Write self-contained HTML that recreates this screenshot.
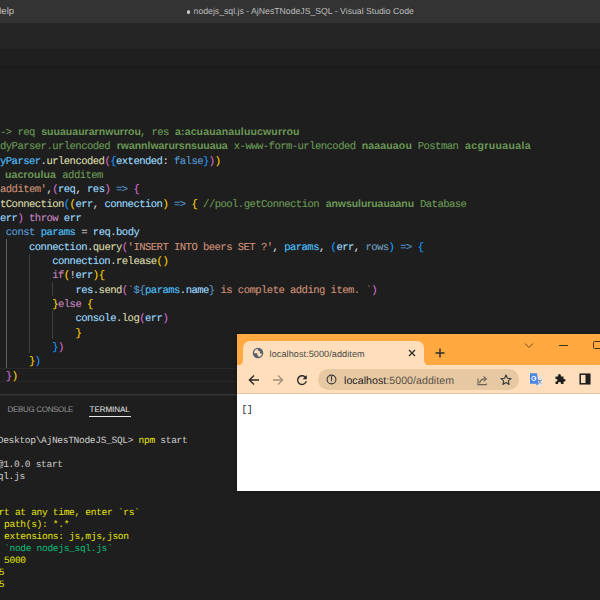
<!DOCTYPE html>
<html><head><meta charset="utf-8">
<style>
*{margin:0;padding:0;box-sizing:border-box}
html,body{width:600px;height:600px;overflow:hidden;background:#1e1e1e}
body{position:relative;font-family:"Liberation Sans",sans-serif;text-rendering:geometricPrecision}
.abs{position:absolute}
#title{left:0;top:0;width:600px;height:22.5px;background:#333333}
#title .t{position:absolute;top:5.4px;font-size:8.7px;color:#bdbdbd;white-space:nowrap;line-height:12px;text-rendering:geometricPrecision}
#tabs{left:0;top:22.5px;width:600px;height:26.3px;background:#252526}
#crumb{left:0;top:48.8px;width:600px;height:17px;background:#1f1f1f}
#shadow{left:0;top:65.7px;width:600px;height:2.3px;background:linear-gradient(#151515,#1e1e1e)}
.ln{position:absolute;left:0;height:14.33px;line-height:14.33px;font-family:"Liberation Mono",monospace;font-size:10.6px;letter-spacing:-0.56px;text-rendering:geometricPrecision;white-space:pre;color:#d4d4d4;-webkit-text-stroke:0.1px currentColor}
.seg{position:absolute;height:14.25px;line-height:14.25px;font-family:"Liberation Mono",monospace;font-size:9.617px;white-space:pre;color:#d4d4d4}
.th{position:absolute;height:14.33px;line-height:14.33px;font-family:"Liberation Sans",sans-serif;font-size:10.5px;font-weight:bold;-webkit-text-stroke:0px currentColor;white-space:pre;color:#6a9955;overflow:hidden}
.c{color:#6a9955}.v{color:#9cdcfe}.f{color:#dcdcaa}.k{color:#c586c0}.s{color:#569cd6}.q{color:#ce9178}.n{color:#4fc1ff}
.b1{color:#ffd700}.b2{color:#da70d6}.b3{color:#179fff}
.guide{position:absolute;width:1px;background:#404040}
#curline{left:0;top:368px;width:600px;height:14px;border-top:1px solid #282828;border-bottom:1px solid #282828}
#panelborder{left:0;top:394px;width:600px;height:2px;background:linear-gradient(#363636 50%,#292929 50%)}
.ptab{position:absolute;top:404px;font-size:8px;text-rendering:geometricPrecision;line-height:12px;white-space:nowrap;color:#969696}
.tl{position:absolute;left:0;height:12px;line-height:12px;font-family:"Liberation Mono",monospace;font-size:9.6px;letter-spacing:-0.34px;text-rendering:geometricPrecision;white-space:pre;color:#cccccc}
.y{color:#e5e510}.g{color:#0dbc79}
/* chrome */
#chrome{left:237px;top:333.7px;width:364px;height:157.1px;background:#ffa940;overflow:hidden;box-shadow:0 0 3px 1px rgba(0,0,0,0.22)}
</style></head><body>
<div id="title" class="abs">
  <div class="t" style="left:-5.5px;top:6.4px;font-size:9.5px;letter-spacing:0;text-rendering:geometricPrecision">Help</div>
  <div class="abs" style="left:186.6px;top:10.1px;width:3.8px;height:3.8px;border-radius:50%;background:#c8c8c8"></div>
  <div class="t" style="left:193.6px">nodejs_sql.js - AjNesTNodeJS_SQL - Visual Studio Code</div>
</div>
<div id="tabs" class="abs"></div>
<div id="crumb" class="abs"></div>
<div id="shadow" class="abs"></div>

<!-- editor -->
<div id="curline" class="abs"></div>
<div class="guide" style="left:6px;top:239px;height:129px;background:#5e5e5e"></div>
<div class="guide" style="left:29px;top:253.5px;height:99.5px"></div>
<div class="guide" style="left:52px;top:282px;height:14px"></div>
<div class="guide" style="left:52px;top:310.5px;height:28.5px"></div>

<div id="code">
<div class="ln" style="top:126.10px;left:0px"><span class="c">-&gt; req </span></div>
<div class="th" style="top:124.90px;left:41.2px;width:101.8px;letter-spacing:0.036px">suuauaurarnwurrou</div>
<div class="ln" style="top:126.10px;left:139.9px"><span class="c">, res </span></div>
<div class="th" style="top:124.90px;left:175px;width:126.5px;letter-spacing:0.150px">a:acuauanauluucwurrou</div>
<div class="ln" style="top:140.43px;left:0px"><span class="c">dyParser.urlencoded </span></div>
<div class="th" style="top:139.23px;left:116.7px;width:113px;letter-spacing:-0.024px">rwannlwarursnsuuaua</div>
<div class="ln" style="top:140.43px;left:233.8px"><span class="c">x-www-form-urlencoded</span></div>
<div class="th" style="top:139.23px;left:361.7px;width:52.3px;letter-spacing:0.161px">naaauaou</div>
<div class="ln" style="top:140.43px;left:417.7px"><span class="c">Postman</span></div>
<div class="th" style="top:139.23px;left:465px;width:68px;letter-spacing:0.376px">acgruuauala</div>
<div class="ln" style="top:154.76px;left:0px"><span class="n">yParser</span>.<span class="f">urlencoded</span><span class="b2">(</span><span class="b3">{</span><span class="v">extended</span>: <span class="s">false</span><span class="b3">}</span><span class="b2">)</span><span class="b1">)</span></div>
<div class="th" style="top:167.89px;left:5px;width:53px;letter-spacing:0.090px">uacroulua</div>
<div class="ln" style="top:169.09px;left:62.3px"><span class="c">additem</span></div>
<div class="ln" style="top:183.42px;left:0px"><span class="q">additem'</span>,<span class="b2">(</span><span class="v">req</span>, <span class="v">res</span><span class="b2">)</span> <span class="s">=&gt;</span> <span class="b2">{</span></div>
<div class="ln" style="top:197.75px;left:0px"><span class="f">tConnection</span><span class="b3">(</span><span class="b1">(</span><span class="v">err</span>, <span class="v">connection</span><span class="b1">)</span> <span class="s">=&gt;</span> <span class="b1">{</span> <span class="c">//pool.getConnection </span></div>
<div class="th" style="top:196.55px;left:325.7px;width:90.3px;letter-spacing:-0.064px">anwsuluruauaanu</div>
<div class="ln" style="top:197.75px;left:420px"><span class="c">Database</span></div>
<div class="ln" style="top:212.08px;left:0px"><span class="v">err</span><span class="b2">)</span> <span class="k">throw</span> <span class="v">err</span></div>
<div class="ln" style="top:226.41px;left:0px"> <span class="s">const</span> <span class="n">params</span> = <span class="v">req</span>.<span class="v">body</span></div>
<div class="ln" style="top:240.74px;left:0px">     <span class="v">connection</span>.<span class="f">query</span><span class="b2">(</span><span class="q">'INSERT INTO beers SET ?'</span>, <span class="n">params</span>, <span class="b3">(</span><span class="v">err</span>, <span class="v" style="opacity:0.66">rows</span><span class="b3">)</span> <span class="s">=&gt;</span> <span class="b3">{</span></div>
<div class="ln" style="top:255.07px;left:0px">         <span class="v">connection</span>.<span class="f">release</span><span class="b1">()</span></div>
<div class="ln" style="top:269.40px;left:0px">         <span class="k">if</span><span class="b1">(</span>!<span class="v">err</span><span class="b1">)</span><span class="b1">{</span></div>
<div class="ln" style="top:283.73px;left:0px">             <span class="v">res</span>.<span class="f">send</span><span class="b2">(</span><span class="q">`</span><span class="s">${</span><span class="n">params</span>.<span class="v">name</span><span class="s">}</span><span class="q"> is complete adding item. `</span><span class="b2">)</span></div>
<div class="ln" style="top:298.06px;left:0px">         <span class="b1">}</span><span class="k">else</span> <span class="b1">{</span></div>
<div class="ln" style="top:312.39px;left:0px">             <span class="v">console</span>.<span class="f">log</span><span class="b2">(</span><span class="v">err</span><span class="b2">)</span></div>
<div class="ln" style="top:326.72px;left:0px">             <span class="b1">}</span></div>
<div class="ln" style="top:341.05px;left:0px">         <span class="b3">}</span><span class="b2">)</span></div>
<div class="ln" style="top:355.38px;left:0px">     <span class="b1">}</span><span class="b3">)</span></div>
<div class="ln" style="top:369.71px;left:0px"> <span class="b2">}</span><span class="b1">)</span></div>
</div>

<div id="panelborder" class="abs"></div>
<div class="ptab" style="left:7.6px;letter-spacing:-0.33px">DEBUG CONSOLE</div>
<div class="ptab" style="left:89.6px;color:#e7e7e7;letter-spacing:-0.05px">TERMINAL</div>
<div class="abs" style="left:89px;top:416px;width:42px;height:1px;background:#e7e7e7"></div>

<div id="term">
<div class="tl" style="top:435.23px;left:-2.25px">Desktop\AjNesTNodeJS_SQL&gt; <span class="y">npm</span> start</div>
<div class="tl" style="top:459.23px;left:-2.25px">@1.0.0 start</div>
<div class="tl" style="top:471.23px;left:-2.25px">ql.js</div>
<div class="tl" style="top:507.23px;left:-1.38px"><span class="y">rt at any time, enter `rs`</span></div>
<div class="tl" style="top:519.23px;left:-1.38px"><span class="y"> path(s): *.*</span></div>
<div class="tl" style="top:531.23px;left:-1.38px"><span class="y"> extensions: js,mjs,json</span></div>
<div class="tl" style="top:543.23px;left:-1.38px"><span class="g"> `node nodejs_sql.js`</span></div>
<div class="tl" style="top:555.23px;left:-1.38px"><span class="y"> 5000</span></div>
<div class="tl" style="top:567.23px;left:-1.38px"><span class="y">5</span></div>
<div class="tl" style="top:579.23px;left:-1.38px"><span class="y">5</span></div>
</div>

<div id="chrome" class="abs">
  <div class="abs" style="left:0;top:0;width:364px;height:32px;background:#ffa940"></div>
  <!-- tab -->
  <div class="abs" style="left:6px;top:7.3px;width:181px;height:26px;background:#ffdfbb;border-radius:7px 7px 0 0"></div>
  <div class="abs" style="left:1px;top:25px;width:6px;height:7px;background:#ffdfbb"></div>
  <div class="abs" style="left:-1px;top:22px;width:7px;height:10px;background:#ffa940;border-radius:0 0 6px 0"></div>
  <div class="abs" style="left:186px;top:25px;width:8px;height:7px;background:#ffdfbb"></div>
  <div class="abs" style="left:187px;top:22px;width:9px;height:10px;background:#ffa940;border-radius:0 0 0 6px"></div>
  <svg class="abs" style="left:14.7px;top:13.8px" width="12" height="12" viewBox="0 0 12 12">
    <circle cx="6" cy="6" r="4.6" fill="none" stroke="#586070" stroke-width="1.4"/>
    <path d="M6 1.2 A4.8 4.8 0 0 1 10.8 6.4 L8.6 6.4 C7.8 6.4 7.6 5.6 7.9 5 C8.1 4.4 7.4 4 6.8 4 C6 4 5.6 3.4 5.8 2.8 Z" fill="#586070"/>
    <path d="M1.2 6.3 L4.6 6.3 C5.4 6.3 5.6 7 5.3 7.5 C5 8.1 5.6 8.6 6.2 8.8 C6.9 9 6.8 10 6.3 10.8 A4.8 4.8 0 0 1 1.2 6.3 Z" fill="#586070"/>
  </svg>
  <div class="abs ctext" style="left:32.6px;top:15px;font-size:9.1px;color:#474747;white-space:nowrap;line-height:11px;letter-spacing:0.07px">localhost:5000/additem</div>
  <svg class="abs" style="left:171px;top:15.5px" width="8" height="8" viewBox="0 0 8 8"><path d="M1 1L7 7M7 1L1 7" stroke="#2b2b2b" stroke-width="1.3"/></svg>
  <svg class="abs" style="left:197.5px;top:14px" width="10" height="10" viewBox="0 0 10 10"><path d="M5 0.5V9.5M0.5 5H9.5" stroke="#2b2b2b" stroke-width="1.4"/></svg>
  <!-- window controls -->
  <svg class="abs" style="left:287px;top:8px" width="10" height="7" viewBox="0 0 10 7"><path d="M1 1.5L5 5.5L9 1.5" stroke="#6b4a20" stroke-width="1" fill="none"/></svg>
  <div class="abs" style="left:322px;top:11px;width:8.5px;height:1px;background:#4a3418"></div>
  <div class="abs" style="left:356px;top:7.5px;width:9px;height:8px;border:1px solid #4a3418;border-radius:1.5px"></div>
  <!-- toolbar -->
  <div class="abs" style="left:0;top:31.8px;width:364px;height:28px;background:#ffdfbb"></div>
  <div class="abs" style="left:0;top:59.5px;width:364px;height:0.8px;background:#e6c49c"></div>
  <svg class="abs" style="left:10.5px;top:40px" width="12" height="12" viewBox="0 0 12 12"><path d="M11 6H1.6M6 1.4L1.4 6L6 10.6" stroke="#2a2a2a" stroke-width="1.4" fill="none"/></svg>
  <svg class="abs" style="left:34.5px;top:40px" width="12" height="12" viewBox="0 0 12 12"><path d="M1 6H10.4M6 1.4L10.6 6L6 10.6" stroke="#a08d78" stroke-width="1.3" fill="none"/></svg>
  <svg class="abs" style="left:59px;top:40px" width="12" height="12" viewBox="0 0 12 12"><path d="M10 4.2A4.4 4.4 0 1 0 10.3 7.2" stroke="#2a2a2a" stroke-width="1.4" fill="none"/><path d="M10.8 1V5.2H6.6Z" fill="#2a2a2a"/></svg>
  <!-- omnibox -->
  <div class="abs" style="left:81px;top:35.6px;width:201.3px;height:20.5px;background:#e6c8a3;border-radius:10.25px"></div>
  <svg class="abs" style="left:89px;top:40.3px" width="11" height="11" viewBox="0 0 11 11"><circle cx="5.5" cy="5.5" r="4.4" stroke="#3a3a3a" stroke-width="1.1" fill="none"/><path d="M5.5 2.6V6.8" stroke="#3a3a3a" stroke-width="1.1" stroke-linecap="round"/></svg>
  <div class="abs" style="left:107px;top:41.6px;font-size:10.6px;line-height:12px;white-space:nowrap;color:#1f1f1f;letter-spacing:0.05px">localhost<span style="color:#5e5246">:5000/additem</span></div>
  <svg class="abs" style="left:239.5px;top:41px" width="11" height="11" viewBox="0 0 11 11"><path d="M1 3.4V9.6H9.2V8.6" stroke="#6e6154" stroke-width="1.1" fill="none"/><path d="M2.6 8.2C2.9 5.6 4.8 3.9 8.4 3.9" stroke="#6e6154" stroke-width="1.1" fill="none"/><path d="M6.6 1.4L9.4 3.9L6.6 6.4" stroke="#6e6154" stroke-width="1.1" fill="none"/></svg>
  <svg class="abs" style="left:262.8px;top:40px" width="12" height="12" viewBox="0 0 12 12"><path d="M6 1L7.45 4.3L11 4.6L8.3 6.9L9.1 10.4L6 8.6L2.9 10.4L3.7 6.9L1 4.6L4.55 4.3Z" stroke="#3a3a3a" stroke-width="1.1" fill="none" stroke-linejoin="round"/></svg>
  <!-- extensions -->
  <svg class="abs" style="left:293px;top:39.5px" width="14" height="14" viewBox="0 0 14 14"><path d="M7 4H12.5V13H7Z" fill="#dfe3ea"/><path d="M8.2 6.5L11.5 11M11.2 6.5L8.2 11M7.8 7.5H11.8" stroke="#7a8597" stroke-width="0.7"/><path d="M0 0.2H7L8.5 10.8H0Z" fill="#4a86e8"/><path d="M6.5 10.8L8.5 10.8L6.8 12.6Z" fill="#3367c8"/><circle cx="3.9" cy="5.4" r="2.1" stroke="#fff" stroke-width="1" fill="none"/><path d="M4 5.4H6" stroke="#fff" stroke-width="0.9"/></svg>
  <svg class="abs" style="left:317px;top:39.5px" width="12" height="12" viewBox="0 0 12 12"><path d="M1.5 3.5H4C4 2 4.5 1 5.5 1C6.5 1 7 2 7 3.5H9.5V6C11 6 11.5 6.5 11.5 7.3C11.5 8.2 11 8.7 9.5 8.7V11H7C7 9.6 6.5 9.1 5.5 9.1C4.5 9.1 4 9.6 4 11H1.5V8.6C3 8.6 3.4 8 3.4 7.2C3.4 6.4 3 5.9 1.5 5.9Z" fill="#1f1f1f"/></svg>
  <svg class="abs" style="left:341.5px;top:39.5px" width="12" height="12" viewBox="0 0 12 12"><rect x="1.2" y="1.2" width="9.6" height="9.6" stroke="#1f1f1f" stroke-width="1.5" fill="none"/><rect x="6.5" y="1.2" width="4.3" height="9.6" fill="#1f1f1f"/></svg>
  <!-- content -->
  <div class="abs" style="left:0;top:60px;width:364px;height:97.1px;background:#ffffff"></div>
  <div class="abs" style="left:4.4px;top:70px;font-family:'Liberation Mono',monospace;font-size:9.5px;line-height:12px;color:#222">[]</div>
</div>
</body></html>
